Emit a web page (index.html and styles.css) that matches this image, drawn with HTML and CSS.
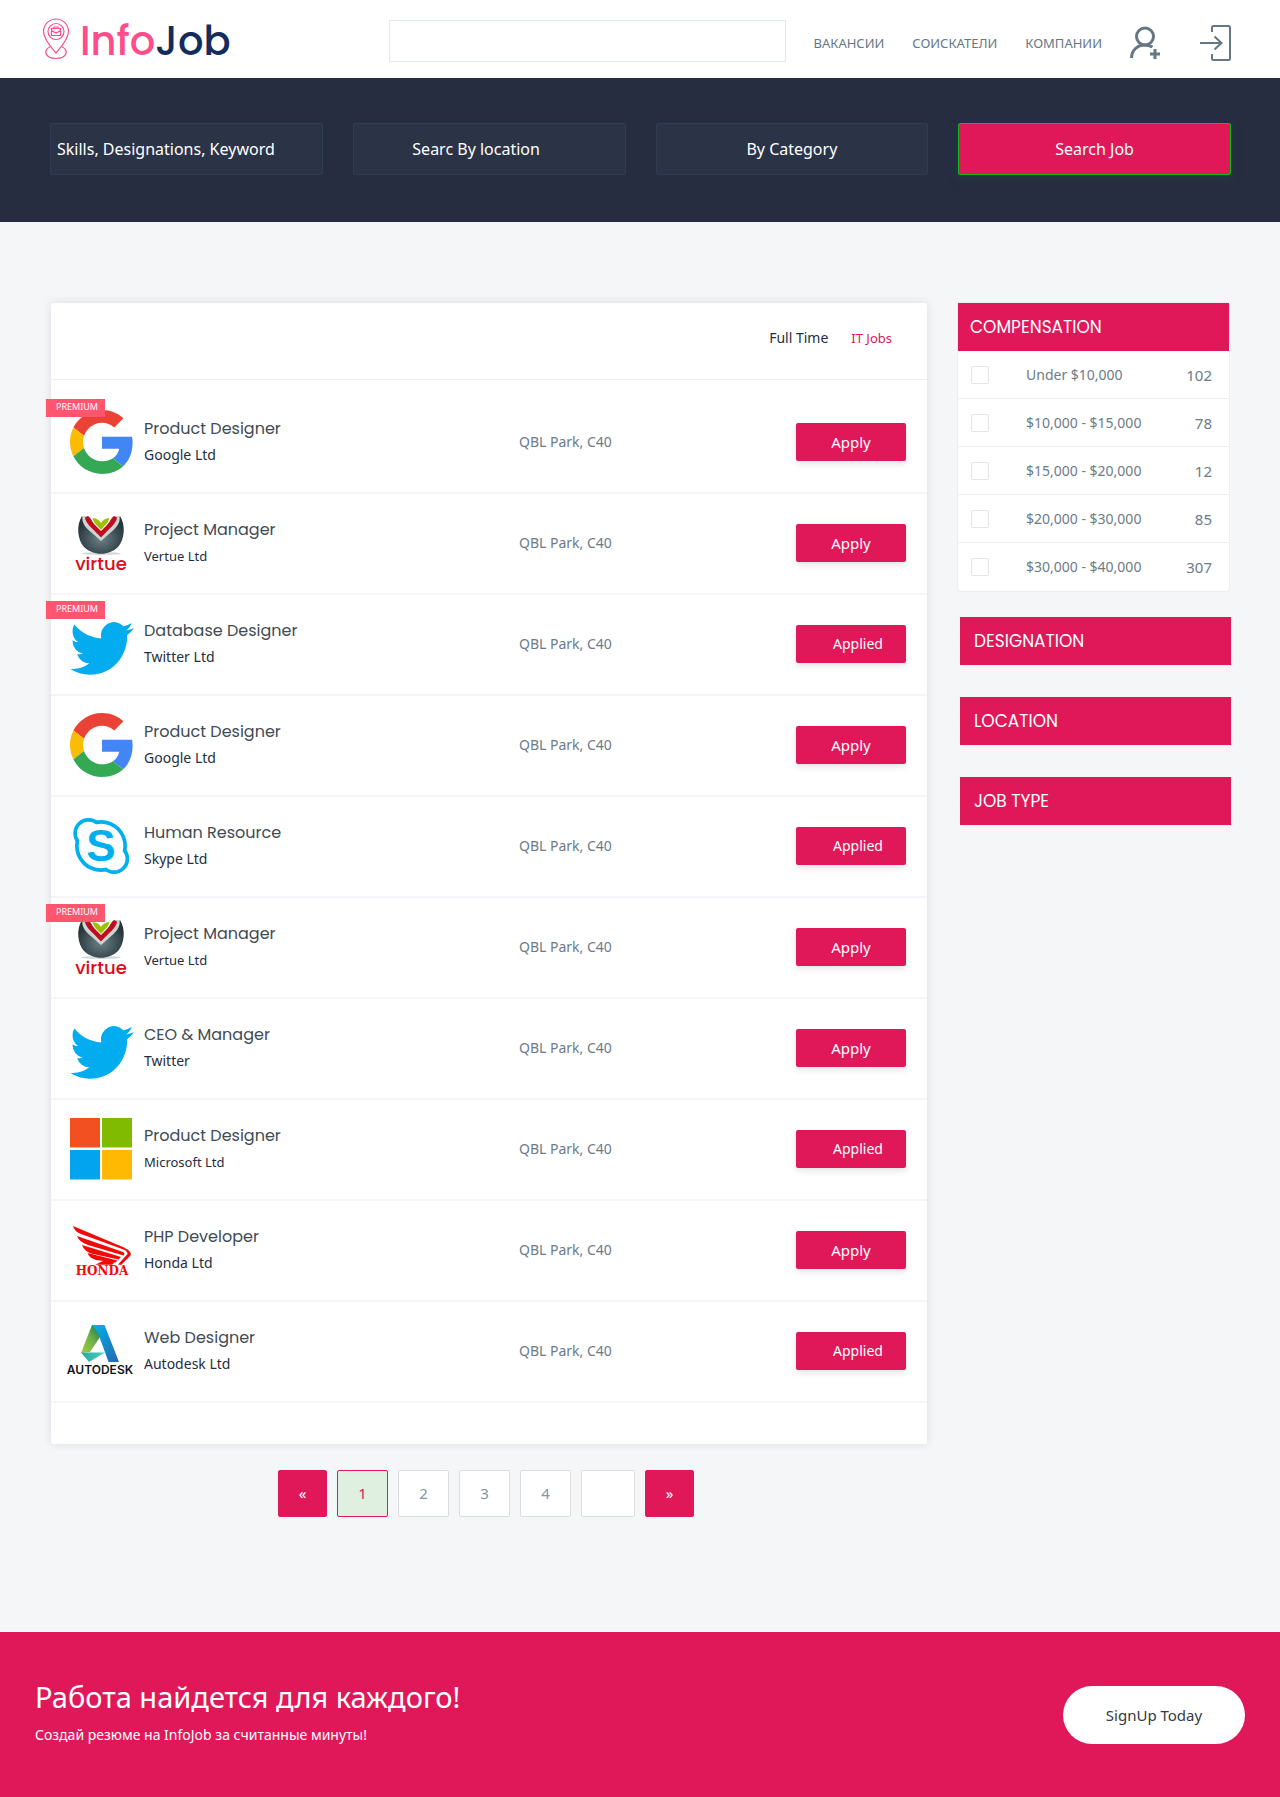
FILE: index.html
```html
<!DOCTYPE html>
<html lang="ru">
<head>
<meta charset="utf-8">
<meta name="viewport" content="width=device-width, initial-scale=1">
<title>InfoJob</title>
<link rel="stylesheet" href="styles.css">
</head>
<body>
<svg class="gradients" aria-hidden="true">
  <defs>
    <radialGradient id="ball" cx="50%" cy="60%" r="55%"><stop offset="0" stop-color="#6d8288"/><stop offset="1" stop-color="#26363b"/></radialGradient>
    <linearGradient id="adGreen" x1="0" y1="1" x2="1" y2="0"><stop offset="0" stop-color="#a5cd39"/><stop offset=".5" stop-color="#6fb04a"/><stop offset="1" stop-color="#0b6b4f"/></linearGradient>
    <linearGradient id="adBlue" x1="0" y1="0" x2="1" y2="1"><stop offset="0" stop-color="#00b5ea"/><stop offset="1" stop-color="#2566b0"/></linearGradient>
    <linearGradient id="adTeal" x1="0" y1="0" x2="1" y2="0"><stop offset="0" stop-color="#27a9a4"/><stop offset="1" stop-color="#4ad0c0"/></linearGradient>
  </defs>
</svg>
<svg class="sprite" aria-hidden="true">
  <symbol id="google" viewBox="0 0 68 68">
    <g transform="translate(3 1) scale(1.333)">
      <path fill="#ea4335" d="M24 9.500c3.540 0 6.710 1.220 9.210 3.600l6.850-6.850C35.900 2.380 30.470 0 24 0 14.620 0 6.510 5.380 2.560 13.220l7.980 6.190C12.430 13.720 17.740 9.500 24 9.500z"/>
      <path fill="#4285f4" d="M46.980 24.550c0-1.570-.15-3.090-.38-4.550H24v9.020h12.940c-.58 2.960-2.260 5.480-4.780 7.180l7.730 6c4.510-4.180 7.090-10.360 7.090-17.650z"/>
      <path fill="#fbbc05" d="M10.530 28.590c-.48-1.450-.76-2.990-.76-4.590s.27-3.140.76-4.590l-7.980-6.190C.92 16.460 0 20.120 0 24c0 3.880.92 7.540 2.560 10.780l7.970-6.190z"/>
      <path fill="#34a853" d="M24 48c6.480 0 11.930-2.130 15.890-5.810l-7.730-6c-2.150 1.450-4.920 2.300-8.160 2.300-6.260 0-11.570-4.220-13.470-9.910l-7.980 6.190C6.510 42.620 14.620 48 24 48z"/>
    </g>
  </symbol>
  <symbol id="virtue" viewBox="0 0 68 68">
    <ellipse cx="34" cy="43.500" rx="20" ry="1.500" fill="#d3d6d7"/>
    <path fill="url(#ball)" d="M15 6C9 15 10.500 30 17 37c9 9 25 9 34 0 6.500-7 8-22 2-31L34 29z"/>
    <path fill="#d0d3d4" d="M15.500 6h5L34 22 47.500 6h5c1 6-2 10-6 14L34 31 21.500 20c-4-4-7-8-6-14z"/>
    <path fill="#c00d1e" d="M18 7.500 21 6c2 1 4 5 6 8l7 7 7-7c2-3 4-7 6-8l3 1.500c0 6-11 14-16 20C29 21.500 18 13.500 18 7.500z"/>
    <path fill="#9fc000" d="M25.500 8c4 .5 7 2 8.500 5 1.500-3 4.500-4.500 8.500-5-1 5-5.500 8-8.500 12-3-4-7.500-7-8.500-12z"/>
    <path fill="#fff" d="M21.500 5.500 34 13 46.500 5.500V4h-25z" opacity="0"/>
    <text x="34" y="60" text-anchor="middle" class="mark mark-virtue">virtue</text>
  </symbol>
  <symbol id="twitter" viewBox="0 0 68 68">
    <path fill="#03acee" transform="translate(3 5) scale(2.650 2.700)" d="M23.953 4.570a10 10 0 01-2.825.775 4.958 4.958 0 002.163-2.723c-.951.555-2.005.959-3.127 1.184a4.920 4.920 0 00-8.384 4.482C7.690 8.095 4.067 6.130 1.640 3.162a4.822 4.822 0 00-.666 2.475c0 1.710.87 3.213 2.188 4.096a4.904 4.904 0 01-2.228-.616v.06a4.923 4.923 0 003.946 4.827 4.996 4.996 0 01-2.212.085 4.936 4.936 0 004.604 3.417 9.867 9.867 0 01-6.102 2.105c-.39 0-.779-.023-1.170-.067a13.995 13.995 0 007.557 2.209c9.053 0 13.998-7.496 13.998-13.985 0-.21 0-.42-.015-.63A9.935 9.935 0 0024 4.590z"/>
  </symbol>
  <symbol id="skype" viewBox="0 0 68 68">
    <g fill="#00aff0"><circle cx="34" cy="33" r="26"/><circle cx="21.500" cy="20.200" r="15.200"/><circle cx="47" cy="45.800" r="15.200"/></g>
    <g fill="#fff"><circle cx="34" cy="33" r="22.300"/><circle cx="21.500" cy="20.200" r="11.500"/><circle cx="47" cy="45.800" r="11.500"/></g>
    <text x="34" y="48" text-anchor="middle" class="mark mark-skype">S</text>
  </symbol>
  <symbol id="microsoft" viewBox="0 0 68 68">
    <path fill="#f35022" d="M3 2h30v29.500H3z"/><path fill="#80bb01" d="M35 2h30v29.500H35z"/>
    <path fill="#02a4ef" d="M3 34h30v29.500H3z"/><path fill="#ffb902" d="M35 34h30v29.500H35z"/>
  </symbol>
  <symbol id="honda" viewBox="0 0 68 68">
    <path fill="#f20a0a" d="M6 9l51 21.500q8 4 6.500 8L54 48l-3-.5 9.500-10.500q0-3-4-4.500L14 17Q7 14 6 9z"/>
    <path fill="#f20a0a" d="M10 19l46 16q2.500 1.500.5 3.500L21 28Q12 25 10 19zM15 28l39 12-2.500 2.500L24 36.500Q17 34 15 28zM20.500 36l30 7.500-2 2L29 43Q22 41 20.500 36zM36 44l12 .8-3 3H28z"/>
    <text x="35" y="58" text-anchor="middle" class="mark mark-honda">HONDA</text>
  </symbol>
  <symbol id="autodesk" viewBox="0 0 68 68">
    <path fill="url(#adGreen)" d="M25 7h6l4 9-12 18-9 1z"/>
    <path fill="url(#adBlue)" d="M25 7h12.500L52 44H41.500L31 15z"/>
    <path fill="url(#adTeal)" d="M14 34.500h24L22 44z"/>
    <text x="33" y="56" text-anchor="middle" class="mark mark-autodesk">AUTODESK</text>
  </symbol>
</svg>

<header class="topbar">
  <a class="logo" href="#">
    <svg width="28" height="42" viewBox="0 0 28 42" fill="none" stroke="#ff4c8b" stroke-width="1.200" aria-hidden="true">
      <path d="M14 35C9 29 1.500 21 1.500 13.500a12.500 12.500 0 0 1 25 0C26.500 21 19 29 14 35z"/>
      <circle cx="14" cy="13.500" r="8"/>
      <path d="M9.500 10.500h9v7h-9zM12 10.500V9h4v1.500M9.500 12.500l4.500 2.500 4.500-2.500"/>
      <path d="M8.500 28.500C1 32 2.500 40.500 14 40.500S27 32 19.500 28.500"/>
    </svg>
    <span class="logo-text">Info<b>Job</b></span>
  </a>
  <input class="topbar-search" type="search" aria-label="Поиск">
  <nav class="nav">
    <a href="#">ВАКАНСИИ</a>
    <a href="#">СОИСКАТЕЛИ</a>
    <a href="#">КОМПАНИИ</a>
    <a class="nav-icon" href="#" aria-label="Регистрация">
      <svg width="30" height="34" viewBox="0 0 30 34" fill="none" stroke="#667784" stroke-width="3" aria-hidden="true">
        <circle cx="15" cy="10.500" r="8.500"/><path d="M1.500 32C1.500 24 8 19 14 19q5 0 8.500 2"/><path d="M25 23v10M20 28h10"/>
      </svg>
    </a>
    <a class="nav-icon nav-login" href="#" aria-label="Войти">
      <svg width="31" height="36" viewBox="0 0 31 36" fill="none" stroke="#667784" stroke-width="2" aria-hidden="true">
        <path d="M12 7V2.500Q12 1 13.500 1h15Q30 1 30 2.500v31Q30 35 28.500 35h-15Q12 35 12 33.500V29"/><path d="M0 18h21M14.500 11.500 21.500 18l-7 6.500"/>
      </svg>
    </a>
  </nav>
</header>

<form class="finder">
  <input class="field" type="text" placeholder="Skills, Designations, Keyword" aria-label="Skills, Designations, Keyword">
  <input class="field field-location" type="text" placeholder="Searc By location" aria-label="Location">
  <input class="field field-category" type="text" placeholder="By Category" aria-label="Category">
  <button class="finder-submit" type="button">Search Job</button>
</form>

<main class="page">
  <section class="results">
    <div class="jobs">
      <div class="jobs-head">
        <a href="#">Full Time</a>
        <a class="active" href="#">IT Jobs</a>
      </div>
      <ul class="job-list">
        <li class="job"><svg class="job-logo" aria-hidden="true"><use href="#google"/></svg><span class="badge">PREMIUM</span><div class="job-name"><h3>Product Designer</h3><p>Google Ltd</p></div><p class="place">QBL Park, C40</p><button class="apply" type="button">Apply</button></li>
        <li class="job"><svg class="job-logo" aria-hidden="true"><use href="#virtue"/></svg><div class="job-name"><h3>Project Manager</h3><p class="small">Vertue Ltd</p></div><p class="place">QBL Park, C40</p><button class="apply" type="button">Apply</button></li>
        <li class="job"><svg class="job-logo" aria-hidden="true"><use href="#twitter"/></svg><span class="badge">PREMIUM</span><div class="job-name"><h3>Database Designer</h3><p>Twitter Ltd</p></div><p class="place">QBL Park, C40</p><button class="apply applied" type="button">Applied</button></li>
        <li class="job"><svg class="job-logo" aria-hidden="true"><use href="#google"/></svg><div class="job-name"><h3>Product Designer</h3><p>Google Ltd</p></div><p class="place">QBL Park, C40</p><button class="apply" type="button">Apply</button></li>
        <li class="job"><svg class="job-logo" aria-hidden="true"><use href="#skype"/></svg><div class="job-name"><h3>Human Resource</h3><p>Skype Ltd</p></div><p class="place">QBL Park, C40</p><button class="apply applied" type="button">Applied</button></li>
        <li class="job"><svg class="job-logo" aria-hidden="true"><use href="#virtue"/></svg><span class="badge">PREMIUM</span><div class="job-name"><h3>Project Manager</h3><p class="small">Vertue Ltd</p></div><p class="place">QBL Park, C40</p><button class="apply" type="button">Apply</button></li>
        <li class="job"><svg class="job-logo" aria-hidden="true"><use href="#twitter"/></svg><div class="job-name"><h3>CEO &amp; Manager</h3><p>Twitter</p></div><p class="place">QBL Park, C40</p><button class="apply" type="button">Apply</button></li>
        <li class="job"><svg class="job-logo" aria-hidden="true"><use href="#microsoft"/></svg><div class="job-name"><h3>Product Designer</h3><p class="small">Microsoft Ltd</p></div><p class="place">QBL Park, C40</p><button class="apply applied" type="button">Applied</button></li>
        <li class="job"><svg class="job-logo" aria-hidden="true"><use href="#honda"/></svg><div class="job-name"><h3>PHP Developer</h3><p>Honda Ltd</p></div><p class="place">QBL Park, C40</p><button class="apply" type="button">Apply</button></li>
        <li class="job"><svg class="job-logo" aria-hidden="true"><use href="#autodesk"/></svg><div class="job-name"><h3>Web Designer</h3><p>Autodesk Ltd</p></div><p class="place">QBL Park, C40</p><button class="apply applied" type="button">Applied</button></li>
      </ul>
    </div>
    <nav class="pager" aria-label="Pages">
      <a class="step" href="#">«</a>
      <a class="current" href="#">1</a>
      <a href="#">2</a>
      <a href="#">3</a>
      <a href="#">4</a>
      <a class="blank" href="#" aria-label="More"></a>
      <a class="step" href="#">»</a>
    </nav>
  </section>

  <aside class="filters">
    <section class="panel">
      <h2>COMPENSATION</h2>
      <label class="option"><input type="checkbox"><span>Under $10,000</span><span class="count">102</span></label>
      <label class="option"><input type="checkbox"><span>$10,000 - $15,000</span><span class="count">78</span></label>
      <label class="option"><input type="checkbox"><span>$15,000 - $20,000</span><span class="count">12</span></label>
      <label class="option"><input type="checkbox"><span>$20,000 - $30,000</span><span class="count">85</span></label>
      <label class="option"><input type="checkbox"><span>$30,000 - $40,000</span><span class="count">307</span></label>
    </section>
    <div class="collapsed">
      <button type="button">DESIGNATION</button>
      <button type="button">LOCATION</button>
      <button type="button">JOB TYPE</button>
    </div>
  </aside>
</main>

<footer class="cta">
  <div class="cta-text">
    <h2>Работа найдется для каждого!</h2>
    <p>Создай резюме на InfoJob за считанные минуты!</p>
  </div>
  <button class="signup" type="button">SignUp Today</button>
</footer>
</body>
</html>
```
FILE: styles.css
```css
:root {
  --pink: #e0185a;
  --navy: #262d40;
  --grey: #6c7b88;
  --line: #f4f5f8;
  --heading: Poppins, Inter, sans-serif;
}

* { box-sizing: border-box; }

body {
  margin: 0;
  background: #fff;
  font-family: "Noto Sans", sans-serif;
  font-size: 14px;
  line-height: 20px;
  color: var(--navy);
}

h2, h3, p, ul { margin: 0; padding: 0; font-weight: 400; }
a { color: inherit; text-decoration: none; }
button, input { font: inherit; }
button { cursor: pointer; }
.gradients { position: absolute; width: 0; height: 0; }
.sprite { display: none; }

/* Header */
.topbar {
  display: flex;
  align-items: center;
  min-height: 78px;
  padding: 0 49px 0 42px;
}
.logo { display: flex; align-items: center; gap: 10px; flex: 0 0 347px; }
.logo-text {
  padding-top: 4px;
  font-family: var(--heading);
  font-size: 40px;
  line-height: 48px;
  font-weight: 500;
  color: #ff4c8b;
}
.logo-text b { font-weight: 500; color: #142c5c; }
.topbar-search {
  flex: 1;
  min-width: 120px;
  height: 42px;
  margin-top: 4px;
  padding: 0 12px;
  border: 1px solid #e2e8ef;
  background: #fff;
  appearance: none;
}
.nav {
  display: flex;
  align-items: center;
  gap: 28px;
  margin: 8px 0 0 28px;
  font-size: 13px;
  color: #667784;
}
.nav-icon { display: flex; }
.nav-login { margin-left: 12px; }

/* Search row */
.finder {
  display: grid;
  grid-template-columns: repeat(4, 1fr);
  gap: 30px;
  padding: 45px 49px 47px 50px;
  background: var(--navy);
}
.field, .finder-submit {
  width: 100%;
  height: 52px;
  border-radius: 2px;
  font-size: 16px;
  color: #fff;
}
.field {
  padding: 0 6px;
  border: 1px solid #303d55;
  background: #2b3347;
}
.field::placeholder { color: #fff; opacity: 1; }
.field-location { padding-right: 32px; text-align: center; }
.field-category { text-align: center; }
.finder-submit {
  border: 1px solid #0db914;
  background: var(--pink);
  box-shadow: 0 4px 10px rgba(40, 64, 72, .6);
}

/* Page body */
.page {
  display: grid;
  grid-template-columns: minmax(0, 1fr) 271px;
  gap: 31px;
  padding: 81px 51px 114px;
  background: #f4f6f8;
}
.jobs {
  padding-bottom: 41px;
  border-radius: 3px;
  background: #fff;
  box-shadow: 0 0 10px rgba(38, 45, 64, .12);
}
.jobs-head {
  display: flex;
  justify-content: flex-end;
  align-items: center;
  gap: 23px;
  height: 77px;
  padding: 0 35px 6px;
  border-bottom: 1px solid #eceef1;
}
.jobs-head .active { font-size: 13px; color: var(--pink); }
.job-list { padding-top: 13px; list-style: none; }
.job {
  position: relative;
  display: grid;
  grid-template-columns: 68px 366fr 268fr 110px;
  column-gap: 9px;
  align-items: center;
  min-height: 101px;
  padding: 0 21px 2px 16px;
  border-bottom: 2px solid var(--line);
}
.job-logo { width: 68px; height: 68px; margin-top: 2px; }
.badge {
  position: absolute;
  top: 6px;
  left: -5px;
  width: 59px;
  height: 18px;
  padding-left: 10px;
  background: #ff556f;
  font-size: 9px;
  line-height: 16px;
  color: #fff;
}
.job-name h3 {
  font-family: var(--heading);
  font-size: 16px;
  line-height: 26px;
  color: #414b54;
}
.job-name p { line-height: 26px; }
.job-name .small { font-size: 13px; }
.place { color: var(--grey); }
.apply {
  height: 38px;
  padding: 0;
  border: 0;
  border-radius: 2px;
  background: var(--pink);
  box-shadow: 0 3px 6px rgba(38, 45, 64, .12);
  font-size: 15px;
  color: #fff;
}
.applied { padding-left: 14px; font-size: 14px; }

.mark { font-family: Inter, sans-serif; }
.mark-virtue { font-family: var(--heading); font-size: 18px; font-weight: 500; fill: #d90d1c; }
.mark-skype { font-family: "Liberation Sans", sans-serif; font-size: 44px; font-weight: 700; fill: #00aff0; }
.mark-honda { font-family: "DejaVu Serif", serif; font-size: 12px; font-weight: 700; fill: #f20a0a; }
.mark-autodesk { font-size: 12px; font-weight: 600; fill: #151515; }

/* Pagination */
.pager {
  display: flex;
  justify-content: center;
  gap: 10px;
  padding: 26px 6px 0 0;
}
.pager a {
  width: 51px;
  height: 47px;
  border: 1px solid #dcdddf;
  border-radius: 2px;
  background: #fff;
  font-size: 15px;
  line-height: 45px;
  text-align: center;
  color: #8397a3;
}
.pager .step { width: 49px; border-color: var(--pink); background: var(--pink); color: #fff; }
.pager .current { border-color: var(--pink); background: #dff0e1; color: var(--pink); }
.pager .blank { width: 54px; }

/* Filters */
.panel {
  border-radius: 3px;
  background: #fff;
  box-shadow: 0 0 0 1px #eceef1;
}
.panel h2, .collapsed button {
  font-family: var(--heading);
  font-size: 17px;
  line-height: 48px;
  background: var(--pink);
  color: #fff;
}
.panel h2 { padding-left: 12px; }
.option {
  display: grid;
  grid-template-columns: 18px 1fr auto;
  align-items: center;
  height: 48px;
  padding: 0 17px 0 13px;
  border-bottom: 1px solid #eceef1;
  color: var(--grey);
}
.option:last-child { border-bottom: 0; }
.option input {
  width: 18px;
  height: 18px;
  margin: 0;
  border: 1px solid #e5e6e8;
  border-radius: 2px;
  background: #fff;
  appearance: none;
}
.option input:checked { background: var(--pink); }
.option span { padding-left: 37px; }
.option .count { padding-left: 0; font-size: 15px; }
.collapsed {
  display: grid;
  gap: 32px;
  margin: 26px -2px 0 2px;
}
.collapsed button { padding: 0 0 0 14px; border: 0; text-align: left; }

/* Sign-up banner */
.cta {
  display: flex;
  justify-content: space-between;
  align-items: center;
  min-height: 166px;
  padding: 0 35px;
  border-top: 1px solid #fff;
  background: var(--pink);
  color: #fff;
}
.cta-text { padding-bottom: 8px; }
.cta-text h2 { font-size: 29px; line-height: 42px; }
.cta-text p { padding-top: 7px; }
.signup {
  width: 182px;
  height: 58px;
  border: 0;
  border-radius: 29px;
  background: #fff;
  font-size: 15px;
  color: #333c45;
}
```
